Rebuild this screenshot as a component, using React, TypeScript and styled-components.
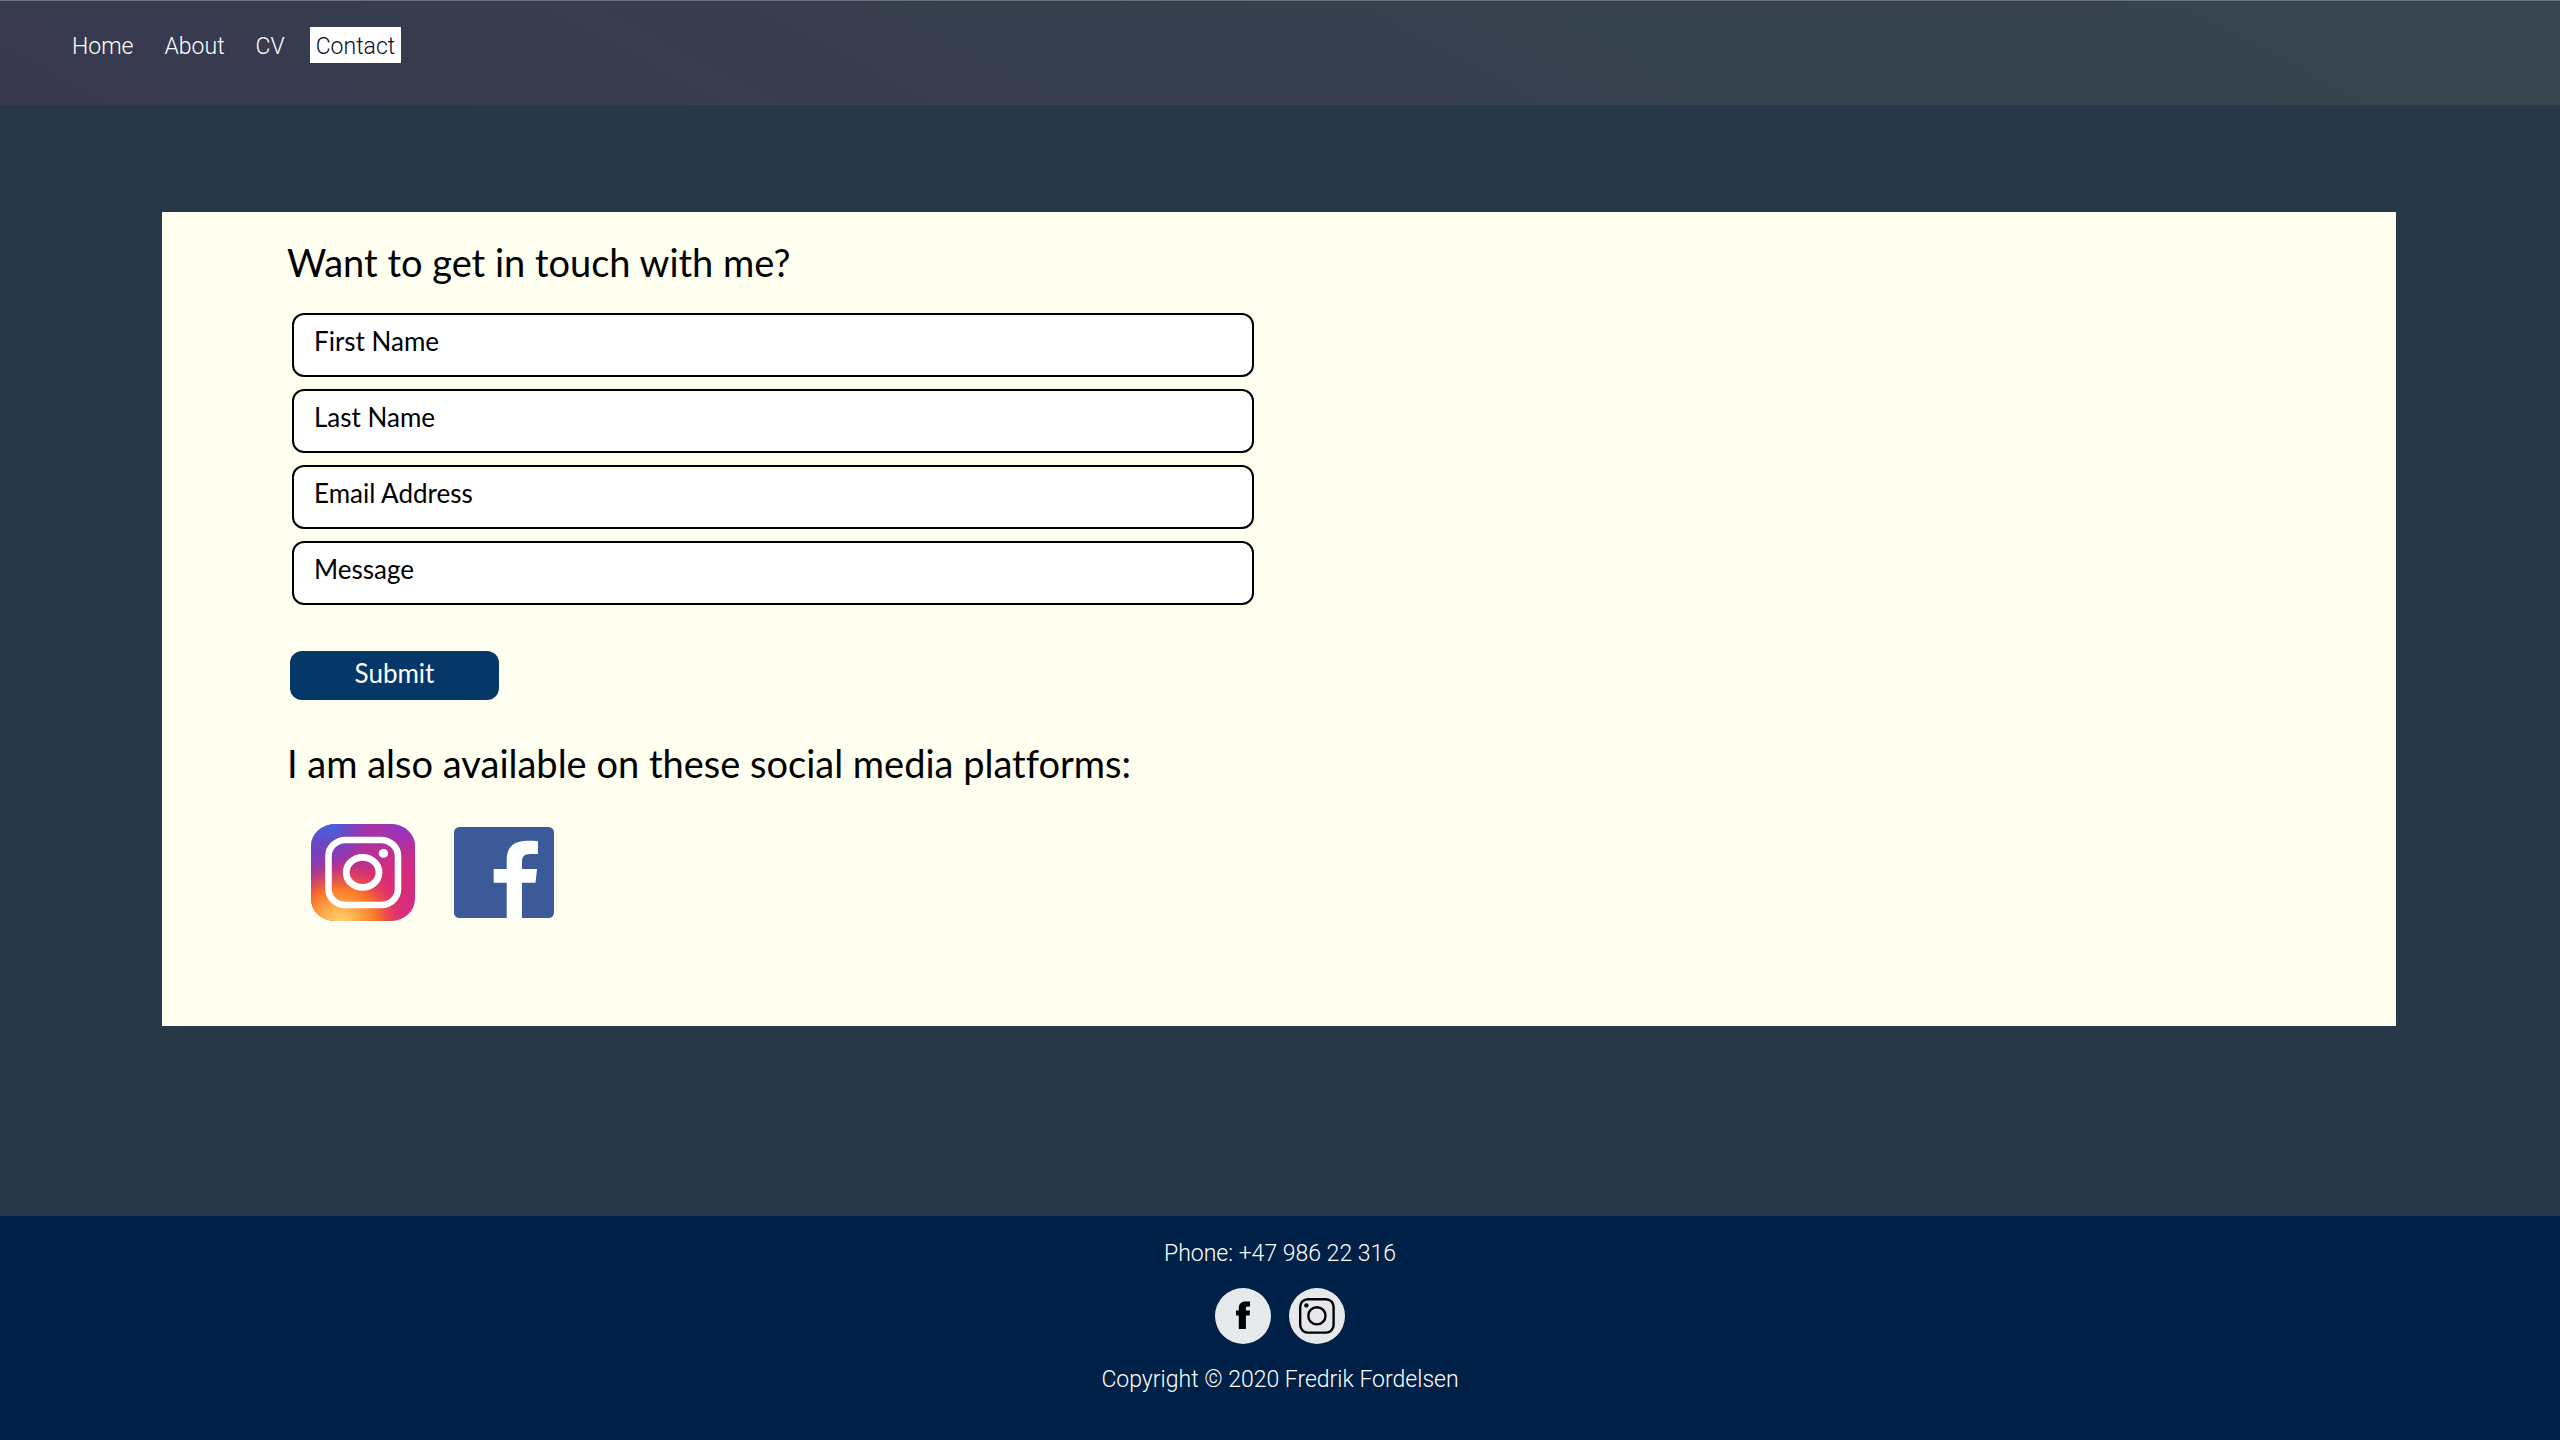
import React from 'react';
import styled, { createGlobalStyle } from 'styled-components';

const GlobalStyle = createGlobalStyle`
  *, *::before, *::after {
    box-sizing: border-box;
  }
  body {
    margin: 0;
    background: #283848;
    color: #000;
    font-family: 'Open Sans', 'Noto Sans', sans-serif;
  }
`;

const Page = styled.div`
  min-height: 100vh;
  display: flex;
  flex-direction: column;
`;

const Header = styled.header`
  padding: 26px 66px 42px;
  border-top: 1px solid #69717f;
  background: linear-gradient(28deg, #38394f, #36464e);
`;

const Nav = styled.nav`
  display: flex;
  gap: 19px;
`;

const NavLink = styled.a<{ $active?: boolean }>`
  padding: 4px 6px 0;
  font-family: Roboto, 'Liberation Sans', sans-serif;
  font-size: 23px;
  font-weight: 300;
  line-height: 32px;
  text-decoration: none;
  color: ${(p) => (p.$active ? '#0b0b24' : '#fff')};
  background: ${(p) => (p.$active ? '#fff' : 'transparent')};
`;

const Main = styled.main`
  flex: 1;
  padding: 107px 164px 190px 162px;
  display: flex;
`;

const Panel = styled.section`
  flex: 1;
  padding: 25px 125px 100px;
  background: #fffff0;
`;

const Title = styled.h2`
  margin: 0;
  font-family: Lato, 'Open Sans', sans-serif;
  font-size: 38px;
  font-weight: 400;
  font-variant-ligatures: none;
  line-height: 50px;
`;

const Form = styled.form`
  display: flex;
  flex-direction: column;
  align-items: flex-start;
  gap: 46px;
  margin: 26px 0 38px;
  padding-left: 3px;
`;

const Fields = styled.div`
  display: flex;
  flex-direction: column;
  gap: 12px;
  width: 100%;
  max-width: 964px;
  padding-left: 2px;
`;

const Field = styled.input`
  width: 100%;
  height: 64px;
  padding: 0 20px 8px;
  border: 2px solid #000;
  border-radius: 12px;
  background: #fff;
  color: #000;
  font-family: Lato, 'Open Sans', sans-serif;
  font-size: 26px;
  &::placeholder {
    color: #000;
    opacity: 1;
  }
`;

const Submit = styled.button`
  width: 209px;
  height: 49px;
  padding: 0 0 6px;
  border: 0;
  border-radius: 12px;
  background: #053769;
  color: #fff;
  font-family: Lato, 'Open Sans', sans-serif;
  font-size: 26px;
`;

const Socials = styled.div`
  display: flex;
  align-items: center;
  gap: 39px;
  margin-top: 36px;
  padding-left: 24px;
`;

const IconLink = styled.a`
  display: block;
  svg {
    display: block;
  }
`;

const Footer = styled.footer`
  display: flex;
  flex-direction: column;
  align-items: center;
  padding: 20px 0 42px;
  background: #002147;
  color: #fff;
`;

const FooterText = styled.p`
  margin: 0;
  font-family: Roboto, 'Liberation Sans', sans-serif;
  font-size: 23px;
  font-weight: 300;
  line-height: 36px;
`;

const FooterIcons = styled.div`
  display: flex;
  gap: 18px;
  margin: 16px 0 18px;
`;

function InstagramLogo() {
  return (
    <svg width="104" height="97" viewBox="0 0 104 97" aria-hidden="true">
      <defs>
        <linearGradient id="igBase" x1="0" y1="0" x2="1" y2="1">
          <stop offset="0" stopColor="#5a48cf" />
          <stop offset="0.3" stopColor="#9a36a8" />
          <stop offset="0.6" stopColor="#dd2a72" />
          <stop offset="1" stopColor="#d42d88" />
        </linearGradient>
        <radialGradient id="igBlue" cx="0.18" cy="0" r="0.42">
          <stop offset="0" stopColor="#3f6be0" />
          <stop offset="1" stopColor="#6a3cc4" stopOpacity="0" />
        </radialGradient>
        <radialGradient id="igPurple" cx="0.9" cy="0" r="0.6">
          <stop offset="0" stopColor="#8b36cc" />
          <stop offset="1" stopColor="#c42f94" stopOpacity="0" />
        </radialGradient>
        <radialGradient id="igWarm" cx="0.28" cy="1.02" r="0.66">
          <stop offset="0" stopColor="#ffd873" />
          <stop offset="0.25" stopColor="#fdb04c" />
          <stop offset="0.55" stopColor="#fa7328" />
          <stop offset="1" stopColor="#e52d5c" stopOpacity="0" />
        </radialGradient>
      </defs>
      {['igBase', 'igBlue', 'igPurple', 'igWarm'].map((id) => (
        <rect key={id} width="104" height="97" rx="24" ry="22" fill={`url(#${id})`} />
      ))}
      <rect x="17.5" y="16" width="69.5" height="65" rx="17" ry="16" fill="none" stroke="#fff" strokeWidth="6.6" />
      <ellipse cx="51.6" cy="48.4" rx="16.4" ry="15" fill="none" stroke="#fff" strokeWidth="6.8" />
      <ellipse cx="72.4" cy="29.4" rx="4.7" ry="4.4" fill="#fff" />
    </svg>
  );
}

function FacebookLogo() {
  return (
    <svg width="100" height="91" viewBox="0 0 100 91" aria-hidden="true">
      <rect width="100" height="91" rx="5.5" fill="#3d5a98" />
      <path
        d="M52.7 91V55.7H39.7V42H52.7V32C52.7 19.5 61 13.7 73 13.7C77.5 13.7 81.5 13.8 84 14.2V27H76C70 27 68 30 68 34.5V42H83L81.5 55.7H68V91Z"
        fill="#fff"
      />
    </svg>
  );
}

function FacebookBadge() {
  return (
    <svg width="56" height="56" viewBox="0 0 56 56" aria-hidden="true">
      <circle cx="28" cy="28" r="28" fill="#e6eaec" />
      <path
        d="M23.8 41V27.4H21V22.4H23.8V20C23.8 15.6 26.4 13.4 30.6 13.4H35V18.4H32.6C31.3 18.4 30.9 19.1 30.9 20.3V22.4H35L34.6 27.4H30.9V41Z"
        fill="#000"
      />
    </svg>
  );
}

function InstagramBadge() {
  return (
    <svg width="56" height="56" viewBox="0 0 56 56" aria-hidden="true">
      <circle cx="28" cy="28" r="28" fill="#e6e8ec" />
      <g fill="none" stroke="#000" strokeWidth="2.4">
        <rect x="11.2" y="11.2" width="33.4" height="33.4" rx="7.6" />
        <circle cx="27.9" cy="27.8" r="8.6" />
      </g>
      <circle cx="17.4" cy="17.4" r="2.2" fill="#000" />
    </svg>
  );
}

const links = ['Home', 'About', 'CV', 'Contact'];
const fields = [
  { name: 'firstName', label: 'First Name', type: 'text' },
  { name: 'lastName', label: 'Last Name', type: 'text' },
  { name: 'email', label: 'Email Address', type: 'email' },
  { name: 'message', label: 'Message', type: 'text' },
];

export default function App() {
  return (
    <Page>
      <GlobalStyle />
      <Header>
        <Nav aria-label="Main">
          {links.map((link) => (
            <NavLink
              key={link}
              href={`#${link.toLowerCase()}`}
              $active={link === 'Contact'}
              aria-current={link === 'Contact' ? 'page' : undefined}
            >
              {link}
            </NavLink>
          ))}
        </Nav>
      </Header>
      <Main>
        <Panel>
          <Title>Want to get in touch with me?</Title>
          <Form onSubmit={(e) => e.preventDefault()}>
            <Fields>
              {fields.map((f) => (
                <Field key={f.name} name={f.name} type={f.type} placeholder={f.label} aria-label={f.label} />
              ))}
            </Fields>
            <Submit type="submit">Submit</Submit>
          </Form>
          <Title>I am also available on these social media platforms:</Title>
          <Socials>
            <IconLink href="#instagram" aria-label="Instagram">
              <InstagramLogo />
            </IconLink>
            <IconLink href="#facebook" aria-label="Facebook">
              <FacebookLogo />
            </IconLink>
          </Socials>
        </Panel>
      </Main>
      <Footer>
        <FooterText>Phone: +47 986 22 316</FooterText>
        <FooterIcons>
          <IconLink href="#facebook" aria-label="Facebook">
            <FacebookBadge />
          </IconLink>
          <IconLink href="#instagram" aria-label="Instagram">
            <InstagramBadge />
          </IconLink>
        </FooterIcons>
        <FooterText>Copyright © 2020 Fredrik Fordelsen</FooterText>
      </Footer>
    </Page>
  );
}
